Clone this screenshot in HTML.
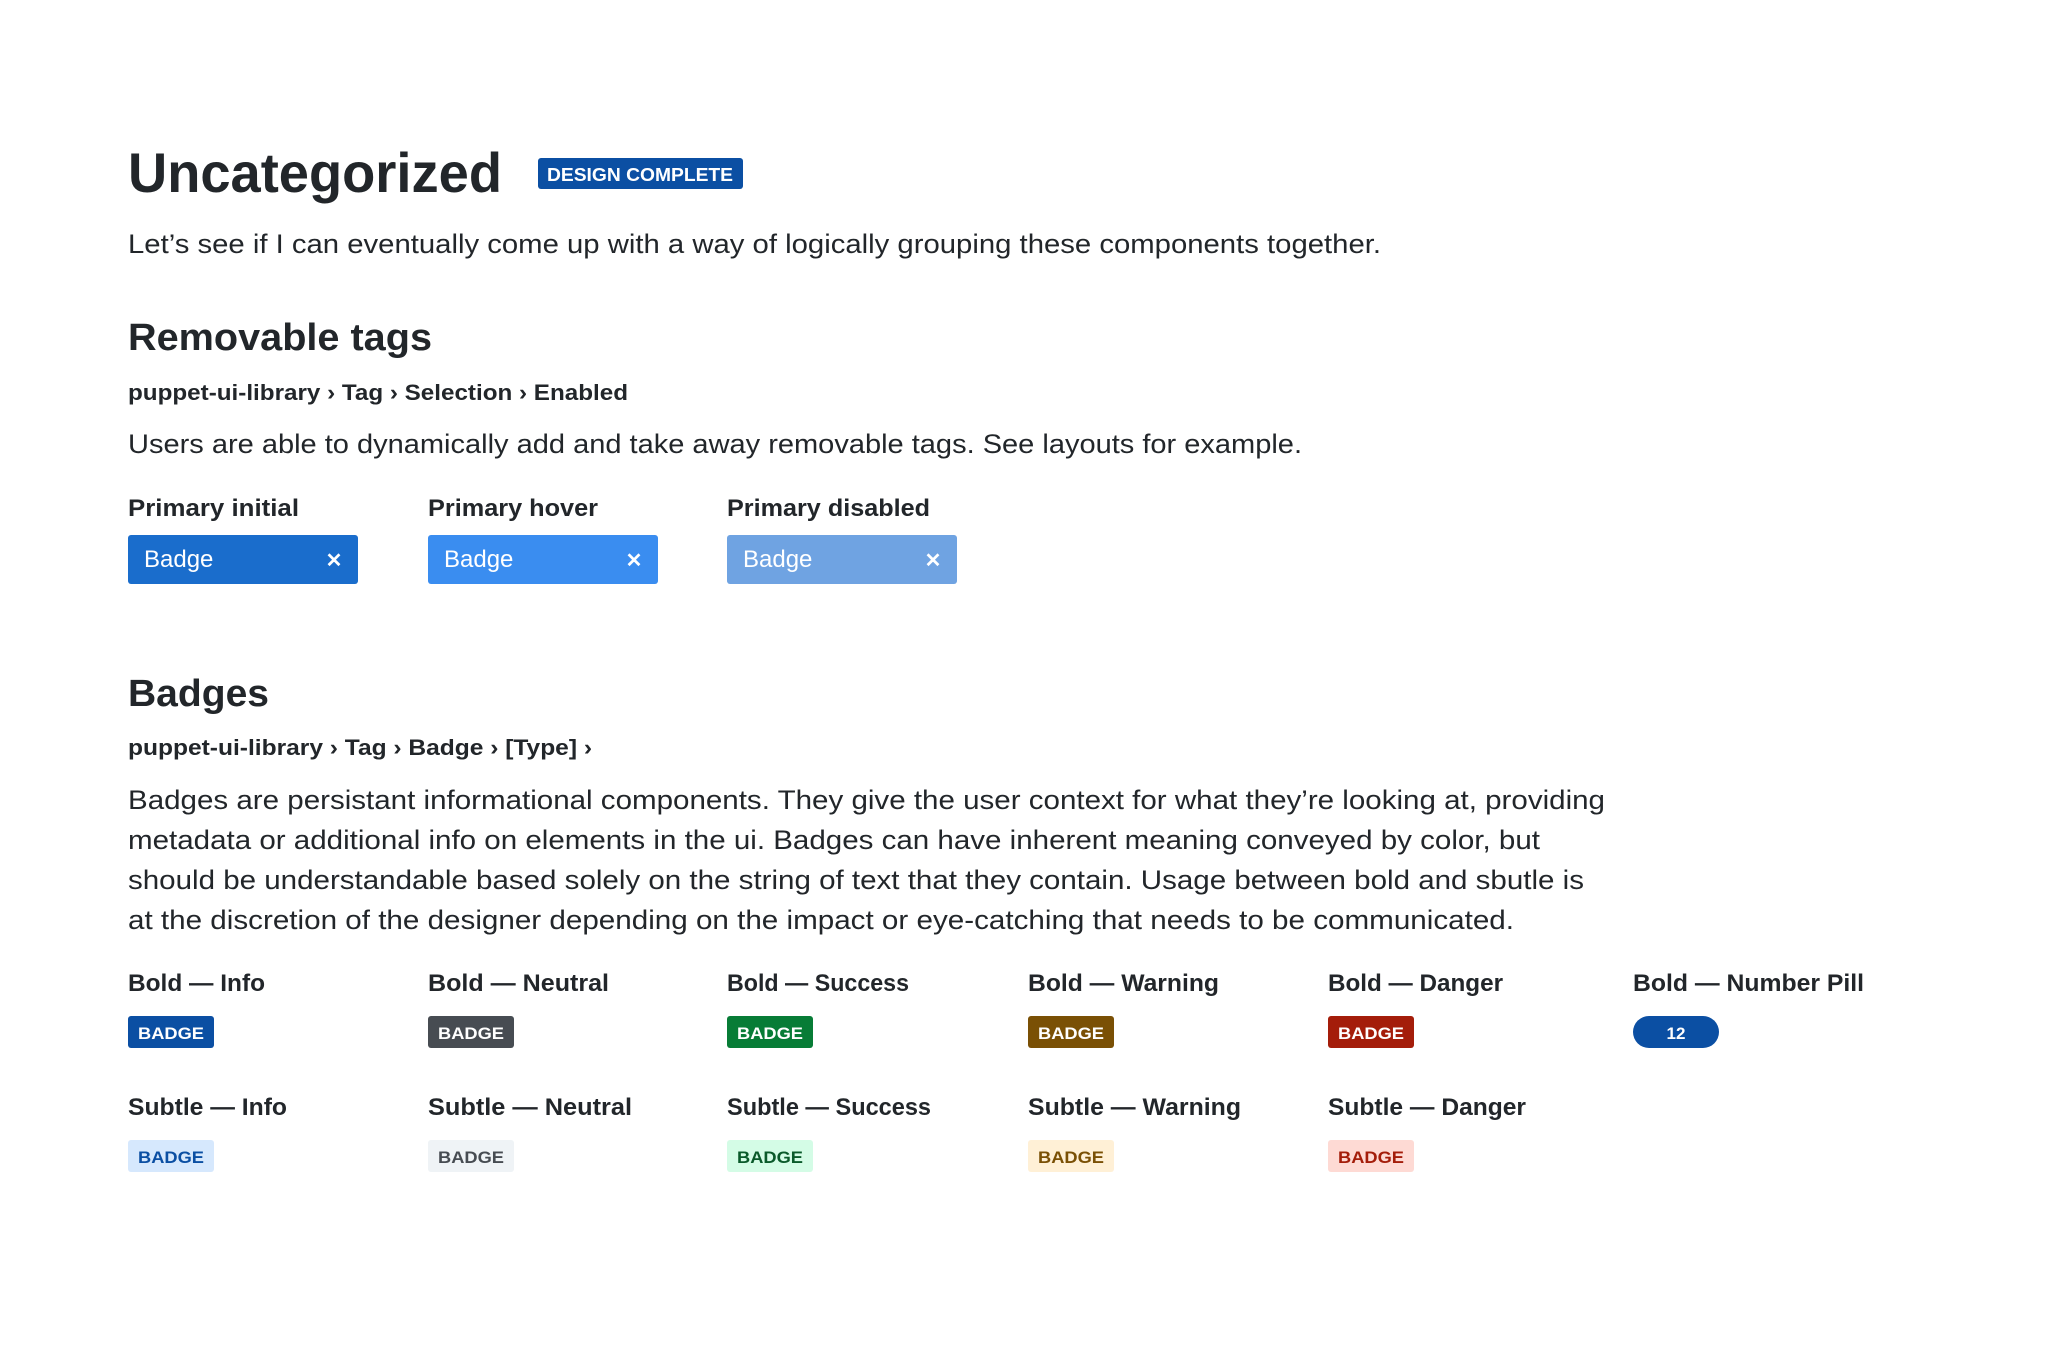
<!DOCTYPE html>
<html><head><meta charset="utf-8"><style>
html,body{margin:0;padding:0;background:#fff;}
svg{display:block}
text{font-family:"Liberation Sans",sans-serif;fill:#22262a}
.b{font-weight:bold}
</style></head><body>
<svg width="2048" height="1372" viewBox="0 0 2048 1372" xmlns="http://www.w3.org/2000/svg">
<text x="128" y="192" font-size="56" class="b" textLength="374" lengthAdjust="spacingAndGlyphs">Uncategorized</text>
<rect x="538" y="158" width="205" height="31" rx="3" fill="#0b4fa3"/>
<text x="640" y="181" font-size="18" class="b" text-anchor="middle" style="fill:#fff" textLength="186" lengthAdjust="spacingAndGlyphs">DESIGN COMPLETE</text>
<text x="128" y="253" font-size="27" textLength="1253" lengthAdjust="spacingAndGlyphs">Let’s see if I can eventually come up with a way of logically grouping these components together.</text>

<text x="128" y="350" font-size="38" class="b" textLength="304" lengthAdjust="spacingAndGlyphs">Removable tags</text>
<text x="128" y="400" font-size="22" class="b" style="font-weight:600" textLength="500" lengthAdjust="spacingAndGlyphs">puppet-ui-library › Tag › Selection › Enabled</text>
<text x="128" y="453" font-size="27" textLength="1174" lengthAdjust="spacingAndGlyphs">Users are able to dynamically add and take away removable tags. See layouts for example.</text>

<text x="128" y="516" font-size="24" class="b" textLength="171" lengthAdjust="spacingAndGlyphs">Primary initial</text>
<text x="428" y="516" font-size="24" class="b" textLength="170" lengthAdjust="spacingAndGlyphs">Primary hover</text>
<text x="727" y="516" font-size="24" class="b" textLength="203" lengthAdjust="spacingAndGlyphs">Primary disabled</text>
<g>
<rect x="128" y="535" width="230" height="49" rx="3" fill="#1a6dcc"/>
<text x="144" y="567" font-size="24" style="fill:#fff">Badge</text>
<text x="334" y="567" font-size="20" class="b" text-anchor="middle" style="fill:#fff">✕</text>
<rect x="428" y="535" width="230" height="49" rx="3" fill="#3a8df0"/>
<text x="444" y="567" font-size="24" style="fill:#fff">Badge</text>
<text x="634" y="567" font-size="20" class="b" text-anchor="middle" style="fill:#fff">✕</text>
<rect x="727" y="535" width="230" height="49" rx="3" fill="#6fa3e2"/>
<text x="743" y="567" font-size="24" style="fill:#fff">Badge</text>
<text x="933" y="567" font-size="20" class="b" text-anchor="middle" style="fill:#fff">✕</text>
</g>

<text x="128" y="706" font-size="38" class="b" textLength="141" lengthAdjust="spacingAndGlyphs">Badges</text>
<text x="128" y="755" font-size="22" class="b" textLength="464" lengthAdjust="spacingAndGlyphs">puppet-ui-library › Tag › Badge › [Type] ›</text>
<text x="128" y="809" font-size="27" textLength="1477" lengthAdjust="spacingAndGlyphs">Badges are persistant informational components. They give the user context for what they’re looking at, providing</text>
<text x="128" y="849" font-size="27" textLength="1412" lengthAdjust="spacingAndGlyphs">metadata or additional info on elements in the ui. Badges can have inherent meaning conveyed by color, but</text>
<text x="128" y="889" font-size="27" textLength="1456" lengthAdjust="spacingAndGlyphs">should be understandable based solely on the string of text that they contain. Usage between bold and sbutle is</text>
<text x="128" y="929" font-size="27" textLength="1386" lengthAdjust="spacingAndGlyphs">at the discretion of the designer depending on the impact or eye-catching that needs to be communicated.</text>

<g font-size="24" class="b">
<text x="128" y="991" class="b" textLength="137" lengthAdjust="spacingAndGlyphs">Bold — Info</text>
<text x="428" y="991" class="b" textLength="181" lengthAdjust="spacingAndGlyphs">Bold — Neutral</text>
<text x="727" y="991" class="b" textLength="182" lengthAdjust="spacingAndGlyphs">Bold — Success</text>
<text x="1028" y="991" class="b" textLength="191" lengthAdjust="spacingAndGlyphs">Bold — Warning</text>
<text x="1328" y="991" class="b" textLength="175" lengthAdjust="spacingAndGlyphs">Bold — Danger</text>
<text x="1633" y="991" class="b" textLength="231" lengthAdjust="spacingAndGlyphs">Bold — Number Pill</text>
<text x="128" y="1115" class="b" textLength="159" lengthAdjust="spacingAndGlyphs">Subtle — Info</text>
<text x="428" y="1115" class="b" textLength="204" lengthAdjust="spacingAndGlyphs">Subtle — Neutral</text>
<text x="727" y="1115" class="b" textLength="204" lengthAdjust="spacingAndGlyphs">Subtle — Success</text>
<text x="1028" y="1115" class="b" textLength="213" lengthAdjust="spacingAndGlyphs">Subtle — Warning</text>
<text x="1328" y="1115" class="b" textLength="198" lengthAdjust="spacingAndGlyphs">Subtle — Danger</text>
</g>

<g>
<rect x="128" y="1016" width="86" height="32" rx="3" fill="#0b4fa3"/>
<text x="171" y="1039" font-size="17" class="b" text-anchor="middle" style="fill:#fff" textLength="66" lengthAdjust="spacingAndGlyphs">BADGE</text>
<rect x="428" y="1016" width="86" height="32" rx="3" fill="#474c52"/>
<text x="471" y="1039" font-size="17" class="b" text-anchor="middle" style="fill:#fff" textLength="66" lengthAdjust="spacingAndGlyphs">BADGE</text>
<rect x="727" y="1016" width="86" height="32" rx="3" fill="#077c36"/>
<text x="770" y="1039" font-size="17" class="b" text-anchor="middle" style="fill:#fff" textLength="66" lengthAdjust="spacingAndGlyphs">BADGE</text>
<rect x="1028" y="1016" width="86" height="32" rx="3" fill="#7a5005"/>
<text x="1071" y="1039" font-size="17" class="b" text-anchor="middle" style="fill:#fff" textLength="66" lengthAdjust="spacingAndGlyphs">BADGE</text>
<rect x="1328" y="1016" width="86" height="32" rx="3" fill="#a41d0a"/>
<text x="1371" y="1039" font-size="17" class="b" text-anchor="middle" style="fill:#fff" textLength="66" lengthAdjust="spacingAndGlyphs">BADGE</text>
<rect x="1633" y="1016" width="86" height="32" rx="16" fill="#0b4fa3"/>
<text x="1676" y="1039" font-size="17" class="b" text-anchor="middle" style="fill:#fff">12</text>

<rect x="128" y="1140" width="86" height="32" rx="3" fill="#d6e8fd"/>
<text x="171" y="1163" font-size="17" class="b" text-anchor="middle" style="fill:#0b4fa3" textLength="66" lengthAdjust="spacingAndGlyphs">BADGE</text>
<rect x="428" y="1140" width="86" height="32" rx="3" fill="#eff3f6"/>
<text x="471" y="1163" font-size="17" class="b" text-anchor="middle" style="fill:#474c52" textLength="66" lengthAdjust="spacingAndGlyphs">BADGE</text>
<rect x="727" y="1140" width="86" height="32" rx="3" fill="#d4fce6"/>
<text x="770" y="1163" font-size="17" class="b" text-anchor="middle" style="fill:#0a5a2a" textLength="66" lengthAdjust="spacingAndGlyphs">BADGE</text>
<rect x="1028" y="1140" width="86" height="32" rx="3" fill="#fff0d6"/>
<text x="1071" y="1163" font-size="17" class="b" text-anchor="middle" style="fill:#7a5005" textLength="66" lengthAdjust="spacingAndGlyphs">BADGE</text>
<rect x="1328" y="1140" width="86" height="32" rx="3" fill="#fedad4"/>
<text x="1371" y="1163" font-size="17" class="b" text-anchor="middle" style="fill:#a41d0a" textLength="66" lengthAdjust="spacingAndGlyphs">BADGE</text>
</g>
</svg>
</body></html>
